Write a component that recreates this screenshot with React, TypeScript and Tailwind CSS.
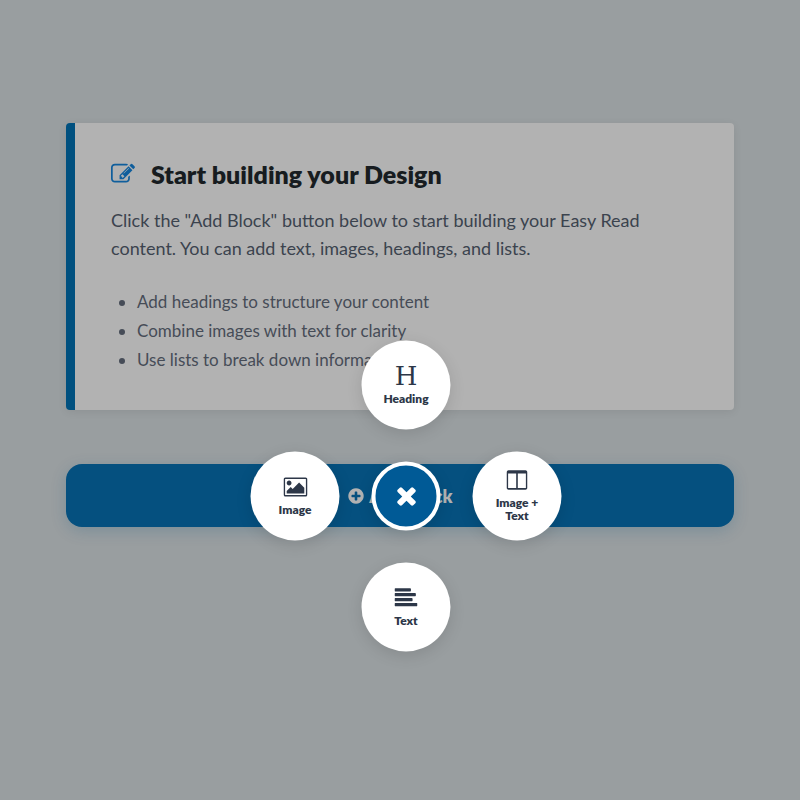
import type { ReactNode } from "react"

/* ------------------------------------------------------------------ */
/*  Icons                                                               */
/* ------------------------------------------------------------------ */

type IconProps = { viewBox?: string; className: string; d: string }

function Icon({ viewBox = "0 0 1792 1792", className, d }: IconProps) {
  return (
    <svg viewBox={viewBox} className={className} fill="currentColor" aria-hidden="true">
      <path d={d} />
    </svg>
  )
}

const paths = {
  edit: "M888 1184l116-116-152-152-116 116v56h96v96h56zm440-720q-16-16-33 1l-350 350q-17 17-1 33t33-1l350-350q17-17 1-33zm80 594v190q0 119-84.500 203.500t-203.500 84.500h-832q-119 0-203.500-84.500t-84.500-203.500v-832q0-119 84.500-203.500t203.500-84.500h832q63 0 117 25 15 7 18 23 3 17-9 29l-49 49q-14 14-32 8-23-6-45-6h-832q-66 0-113 47t-47 113v832q0 66 47 113t113 47h832q66 0 113-47t47-113v-126q0-13 9-22l64-64q15-15 35-7t20 29zm-96-738l288 288-672 672h-288v-288zm444 132l-92 92-288-288 92-92q28-28 68-28t68 28l152 152q28 28 28 68t-28 68z",
  plus: "M1344 960v-128q0-26-19-45t-45-19h-256v-256q0-26-19-45t-45-19h-128q-26 0-45 19t-19 45v256h-256q-26 0-45 19t-19 45v128q0 26 19 45t45 19h256v256q0 26 19 45t45 19h128q26 0 45-19t19-45v-256h256q26 0 45-19t19-45zm320-64q0 209-103 385.500t-279.500 279.500-385.500 103-385.500-103-279.500-279.500-103-385.500 103-385.500 279.500-279.500 385.500-103 385.500 103 279.500 279.500 103 385.500z",
  close: "M1490 1322q0 40-28 68l-136 136q-28 28-68 28t-68-28l-294-294-294 294q-28 28-68 28t-68-28l-136-136q-28-28-28-68t28-68l294-294-294-294q-28-28-28-68t28-68l136-136q28-28 68-28t68 28l294 294 294-294q28-28 68-28t68 28l136 136q28 28 28 68t-28 68l-294 294 294 294q28 28 28 68z",
  image: "M576 576q0 80-56 136t-136 56-136-56-56-136 56-136 136-56 136 56 56 136zm1024 384v448h-1408v-192l320-320 160 160 512-512zm96-704h-1600q-13 0-22.500 9.500t-9.500 22.500v1216q0 13 9.500 22.500t22.500 9.500h1600q13 0 22.500-9.500t9.500-22.500v-1216q0-13-9.500-22.500t-22.500-9.500zm160 32v1216q0 66-47 113t-113 47h-1600q-66 0-113-47t-47-113v-1216q0-66 47-113t113-47h1600q66 0 113 47t47 113z",
  columns: "M160 1536h608v-1152h-640v1120q0 13 9.500 22.500t22.500 9.500zm1376-32v-1120h-640v1152h608q13 0 22.500-9.500t9.500-22.500zm128-1216v1216q0 66-47 113t-113 47h-1344q-66 0-113-47t-47-113v-1216q0-66 47-113t113-47h1344q66 0 113 47t47 113z",
  text: "M1792 1344v128q0 26-19 45t-45 19h-1664q-26 0-45-19t-19-45v-128q0-26 19-45t45-19h1664q26 0 45 19t19 45zm-384-384v128q0 26-19 45t-45 19h-1280q-26 0-45-19t-19-45v-128q0-26 19-45t45-19h1280q26 0 45 19t19 45zm256-384v128q0 26-19 45t-45 19h-1536q-26 0-45-19t-19-45v-128q0-26 19-45t45-19h1536q26 0 45 19t19 45zm-384-384v128q0 26-19 45t-45 19h-1152q-26 0-45-19t-19-45v-128q0-26 19-45t45-19h1152q26 0 45 19t19 45z",
}

/* ------------------------------------------------------------------ */
/*  Intro card                                                          */
/* ------------------------------------------------------------------ */

const tips = [
  "Add headings to structure your content",
  "Combine images with text for clarity",
  "Use lists to break down information",
]

function IntroCard() {
  return (
    <section className="rounded-sm border-l-9 border-[#00507f] bg-[#b2b2b2] px-9 pt-[35px] pb-9 shadow-[0_2px_8px_rgba(0,0,0,0.08)]">
      <h1 className="flex items-center gap-4 text-[25px] leading-8 font-extrabold text-[#171c20]">
        <Icon className="size-6 text-[#0f5e9c]" d={paths.edit} />
        Start building your Design
      </h1>
      <p className="mt-4 max-w-[560px] text-lg leading-7 text-[#3b434e]">
        Click the "Add Block" button below to start building your Easy Read content. You can add text,
        images, headings, and lists.
      </p>
      <ul className="mt-[25px] list-disc pl-[26px] text-[17px] leading-[29px] text-[#464c57]">
        {tips.map((tip) => (
          <li key={tip}>{tip}</li>
        ))}
      </ul>
    </section>
  )
}

/* ------------------------------------------------------------------ */
/*  Radial block menu                                                   */
/* ------------------------------------------------------------------ */

function MenuButton({ icon, label, className }: { icon: ReactNode; label: string; className: string }) {
  return (
    <button
      type="button"
      className={`${className} flex size-[89px] flex-col items-center justify-center gap-1 rounded-full bg-white px-4 pb-px text-xs leading-[13px] font-extrabold text-[#2d3748] shadow-[0_4px_16px_rgba(0,0,0,0.12)]`}
    >
      {icon}
      <span>{label}</span>
    </button>
  )
}

function RadialMenu() {
  return (
    <div className="absolute top-1/2 left-1/2 ml-[6px] grid -translate-x-1/2 -translate-y-1/2 grid-cols-3 grid-rows-3 place-items-center gap-[22px]">
      <MenuButton
        className="col-start-2 row-start-1"
        icon={
          <span className="font-['DejaVu_Serif',serif] text-[26px] leading-[23px] font-normal" aria-hidden="true">
            H
          </span>
        }
        label="Heading"
      />
      <MenuButton
        className="col-start-1 row-start-2"
        icon={<Icon viewBox="-64 0 1920 1792" className="h-[23px] w-6" d={paths.image} />}
        label="Image"
      />
      <button
        type="button"
        aria-label="Close"
        className="col-start-2 row-start-2 flex size-[69px] items-center justify-center rounded-full border-4 border-white bg-[#005a96] text-white shadow-[0_4px_16px_rgba(0,0,0,0.12)]"
      >
        <Icon className="size-7" d={paths.close} />
      </button>
      <MenuButton
        className="col-start-3 row-start-2"
        icon={<Icon viewBox="0 0 1664 1792" className="h-[23px] w-[21px]" d={paths.columns} />}
        label="Image + Text"
      />
      <MenuButton
        className="col-start-2 row-start-3"
        icon={<Icon className="size-[23px]" d={paths.text} />}
        label="Text"
      />
    </div>
  )
}

/* ------------------------------------------------------------------ */
/*  Page                                                                */
/* ------------------------------------------------------------------ */

export default function App() {
  return (
    <main className="min-h-screen bg-[#999ea0] px-[66px] py-[123px] font-[Lato,sans-serif]">
      <IntroCard />
      <div className="relative mt-[54px]">
        <button
          type="button"
          className="flex h-[63px] w-full items-center justify-center gap-1 rounded-2xl bg-[#05507f] text-lg font-extrabold text-[#b2b2b2] shadow-[0_4px_16px_rgba(5,80,127,0.2)]"
        >
          <Icon className="size-[18px]" d={paths.plus} />
          Add Block
        </button>
        <RadialMenu />
      </div>
    </main>
  )
}
